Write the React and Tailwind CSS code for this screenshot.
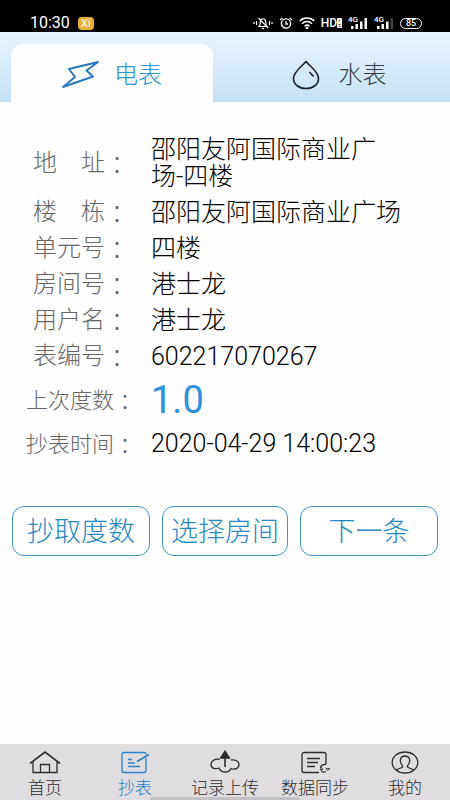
import { useState } from 'react';

const meterInfo = [
  { label: '地　址', value: '邵阳友阿国际商业广场-四楼' },
  { label: '楼　栋', value: '邵阳友阿国际商业广场' },
  { label: '单元号', value: '四楼' },
  { label: '房间号', value: '港士龙' },
  { label: '用户名', value: '港士龙' },
  { label: '表编号', value: '602217070267' },
];

const navItems = [
  { id: 'home', label: '首页', Icon: HomeIcon },
  { id: 'read', label: '抄表', Icon: ReadIcon },
  { id: 'upload', label: '记录上传', Icon: UploadIcon },
  { id: 'sync', label: '数据同步', Icon: SyncIcon },
  { id: 'mine', label: '我的', Icon: MineIcon },
];

function HomeIcon() {
  return (
    <svg className="w-8 h-6" viewBox="0 0 32 24" fill="none" stroke="currentColor" strokeWidth="1.3">
      <path d="M1 13.5 16 2l15 11.5" strokeWidth="1.6" />
      <path d="M4 11.5V22.5H28V11.5M11.5 22.5V14.5h9v8" />
    </svg>
  );
}

function ReadIcon() {
  return (
    <svg className="w-8 h-6" viewBox="0 0 32 24" fill="none" stroke="currentColor" strokeWidth="1.3">
      <path d="M25 2.5H5a2 2 0 0 0-2 2v16a2 2 0 0 0 2 2h20a2 2 0 0 0 2-2V8" />
      <path d="M18 11.5 30 4.5" strokeWidth="2" />
      <path d="M25 2.5a2 2 0 0 1 2 2M9 9.5h4M9 13h7M9 16.5h12" />
    </svg>
  );
}

function UploadIcon() {
  return (
    <svg className="w-8 h-6" viewBox="0 0 32 24" fill="none" stroke="currentColor" strokeWidth="1.3">
      <path d="M10.5 9.5C6.5 8.5 2 10.5 2 14.5c0 4 4.5 5 8 3.5 1.5 5 10 5.5 12 .5 3.5 1.5 8 0 8-4 0-3.5-4-5-8-4.5" />
      <path d="M16 17V7" strokeWidth="1.6" />
      <path d="M16 1 11.5 8h9Z" fill="currentColor" />
    </svg>
  );
}

function SyncIcon() {
  return (
    <svg className="w-8 h-6" viewBox="0 0 32 24" fill="none" stroke="currentColor" strokeWidth="1.3">
      <path d="M20 22.5H5a2 2 0 0 1-2-2v-16a2 2 0 0 1 2-2h20a2 2 0 0 1 2 2V14" />
      <path d="M8 8.5h13M8 12.5h11M8 16.5h8" />
      <path d="M27 14.5c-3-.5-5.500 1-5.500 3.500M22 20.5c1 1.500 3 2 5 1" />
      <path d="M21 19.5h3l-1.500-2ZM31 18.5h-4l1.500 2Z" strokeWidth=".8" />
    </svg>
  );
}

function MineIcon() {
  return (
    <svg className="w-8 h-6" viewBox="0 0 32 24" fill="none" stroke="currentColor" strokeWidth="1.3">
      <ellipse cx="16" cy="12.5" rx="12.8" ry="10.5" />
      <path d="M7.5 20c1.5-1.5 4.5-1.5 6-3 .5-1-.5-2-1.5-3.5C10.5 10 11.5 6 16 6s5.500 4 4 7.500c-1 1.500-2 2.500-1.500 3.500 1.500 1.500 4.500 1.500 6 3" />
    </svg>
  );
}

function BoltIcon() {
  return (
    <svg className="w-[37px] h-7" viewBox="0 0 37 28" fill="none" stroke="#2878bd" strokeWidth="1.9" strokeLinejoin="round">
      <path d="M36 1 7 8l6 8L1 26l30-10.5-6.500-6Z" />
    </svg>
  );
}

function DropIcon() {
  return (
    <svg className="w-7 h-[30px]" viewBox="0 0 28 30" fill="none" stroke="#1c222c" strokeWidth="1.6" strokeLinejoin="round">
      <path d="M14 1.5C10 6.5 1.5 11.5 1.5 18.5 1.5 24.5 7 28.5 14 28.5s12.500-4 12.500-10C26.500 11.500 18 6.500 14 1.500Z" />
      <path d="m17.5 12 4 4.5" />
    </svg>
  );
}

function Signal({ weak }) {
  return (
    <span className="relative block w-5 h-3">
      <svg className="w-5 h-3" viewBox="0 0 20 12" fill="currentColor">
        <rect x="3" y="9" width="2.5" height="3" />
        <rect x="7.5" y="7" width="2.5" height="5" />
        <rect x="12" y="4.5" width="2.5" height="7.5" />
        <rect x="16.5" y="1" width="2.5" height="11" opacity={weak ? 0.25 : 1} />
      </svg>
      <span className="absolute left-0 top-0 text-[8px] leading-[6px] font-medium">4G</span>
    </span>
  );
}

function StatusBar() {
  return (
    <div className="h-8 pt-[14px] pl-[30px] pr-7 bg-black text-white flex items-center justify-between">
      <div className="flex items-center gap-2">
        <span className="text-base leading-4 font-normal">10:30</span>
        <span className="w-4 h-[13px] rounded-sm bg-[#eab036] text-[11px] leading-[13px] font-normal text-center">Xi</span>
      </div>
      <div className="flex items-center gap-[6px]">
        <svg className="w-5 h-3" viewBox="0 0 20 12" fill="none" stroke="currentColor" strokeWidth="1.2">
          <path d="M1 5v2M3.5 4v4M19 5v2M16.5 4v4M6 9.5h8c-1.500-1.500-1-3.500-1.500-5.500-.5-3-4.500-3-5 0C7 6 7.500 8 6 9.500ZM9 11.300h2M5.500 1l9.500 10" />
        </svg>
        <svg className="w-[14px] h-3" viewBox="0 0 14 12" fill="none" stroke="currentColor" strokeWidth="1.3">
          <circle cx="7" cy="6.5" r="4.6" />
          <path d="M7 4v3h2M1 3l2.5-2M13 3l-2.5-2" />
        </svg>
        <svg className="w-4 h-3" viewBox="0 0 16 12" fill="none" stroke="currentColor" strokeWidth="1.5">
          <path d="M.7 4c4-4 10.6-4 14.6 0M3 6.7c3-2.8 7-2.8 10 0M5.5 9.2c1.5-1.3 3.5-1.3 5 0" />
          <circle cx="8" cy="11" r=".6" fill="currentColor" />
        </svg>
        <span className="flex items-center">
          <span className="text-[12px] leading-3 font-medium">HD</span>
          <svg className="w-[5px] h-3" viewBox="0 0 5 12">
            <rect y="1" width="5" height="10" rx="1" fill="currentColor" />
            <path d="M2.5 2.5v2M1.5 7.5h2M1.5 9.5h2" stroke="#000" strokeWidth=".8" />
          </svg>
        </span>
        <Signal />
        <Signal weak />
        <span className="w-[22px] h-[11px] rounded-full border border-white text-[9px] leading-[9px] font-medium text-center">85</span>
      </div>
    </div>
  );
}

// The Traditional form centres the full-width colon in its cell
function Colon() {
  return (
    <span lang="zh-TW" className="font-['Noto_Sans_CJK_TC',sans-serif]">：</span>
  );
}

function InfoRow({ label, value }) {
  return (
    <div className="flex items-center min-h-9 py-1 pl-[33px]">
      <dt className="flex w-[118px] shrink-0 text-[24px] leading-[27px] text-[#666] whitespace-nowrap">
        {label}
        <Colon />
      </dt>
      <dd className="flex-1 text-[25px] leading-[27px] text-black">{value}</dd>
    </div>
  );
}

function ReadingRow({ label, children }) {
  return (
    <div className="flex items-center min-h-11 pl-[26px]">
      <dt className="flex w-[125px] shrink-0 text-[22px] leading-[27px] text-[#666] whitespace-nowrap">
        {label}
        <Colon />
      </dt>
      <dd className="flex-1 whitespace-nowrap">{children}</dd>
    </div>
  );
}

export default function App() {
  const [meter, setMeter] = useState('electric');
  const [page, setPage] = useState('read');

  const tabClass = (id) =>
    meter === id ? 'bg-[#fefefe] text-[#2b94d4]' : 'text-[#333b42]';

  return (
    <div
      lang="zh-CN"
      className="min-h-screen flex flex-col bg-[#fefefe] font-light font-['Roboto','Noto_Sans_CJK_SC',sans-serif]"
    >
      <StatusBar />

      {/* Meter type */}
      <div className="flex items-end h-[70px] pl-[11px] bg-linear-to-b from-[#eaf4fd] to-[#c4e1f6]">
        <button
          onClick={() => setMeter('electric')}
          className={`w-[46%] h-[58px] pt-1 rounded-t-xl flex items-center justify-center gap-[15px] text-2xl ${tabClass('electric')}`}
        >
          <BoltIcon />
          <span>电表</span>
        </button>
        <button
          onClick={() => setMeter('water')}
          className={`flex-1 h-[58px] pt-1 pl-4 rounded-t-xl flex items-center justify-center gap-[18px] text-2xl ${tabClass('water')}`}
        >
          <DropIcon />
          <span>水表</span>
        </button>
      </div>

      {/* Meter details */}
      <main className="flex-1">
        <dl className="pt-[30px] pr-11">
          <div className="pb-1">
            {meterInfo.map((row) => (
              <InfoRow key={row.label} label={row.label} value={row.value} />
            ))}
          </div>
          <ReadingRow label="上次度数">
            <span className="text-[38px] leading-10 font-normal text-[#2f92d8]">1.0</span>
          </ReadingRow>
          <ReadingRow label="抄表时间">
            <span className="text-[25px] leading-[27px] text-black">2020-04-29 14:00:23</span>
          </ReadingRow>
        </dl>

        <div className="grid grid-cols-[11fr_10fr_11fr] gap-3 px-3 pt-10 pb-8">
          {['抄取度数', '选择房间', '下一条'].map((text) => (
            <button
              key={text}
              className="h-[50px] pt-[2px] rounded-xl border border-[#3f92c0] bg-white text-[27px] leading-8 text-[#2587c4] whitespace-nowrap"
            >
              {text}
            </button>
          ))}
        </div>
      </main>

      {/* Bottom navigation */}
      <nav className="relative grid grid-cols-5 h-14 bg-[#dfdde0]">
        {navItems.map(({ id, label, Icon }) => (
          <button
            key={id}
            onClick={() => setPage(id)}
            className={`flex flex-col items-center pt-[6px] gap-[3px] text-[17px] leading-[22px] whitespace-nowrap ${
              page === id ? 'text-[#2b7fc9]' : 'text-[#2d2d2f]'
            }`}
          >
            <Icon />
            <span>{label}</span>
          </button>
        ))}
        <span className="absolute bottom-0 left-1/3 w-1/3 h-[3px] rounded-t-sm bg-[#c3c1c4]" />
      </nav>
    </div>
  );
}
